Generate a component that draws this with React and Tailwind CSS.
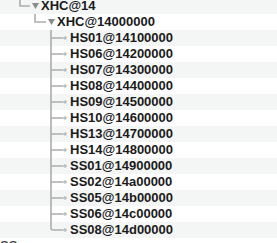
import React from "react"

const children = [
  "HS01@14100000",
  "HS06@14200000",
  "HS07@14300000",
  "HS08@14400000",
  "HS09@14500000",
  "HS10@14600000",
  "HS13@14700000",
  "HS14@14800000",
  "SS01@14900000",
  "SS02@14a00000",
  "SS05@14b00000",
  "SS06@14c00000",
  "SS08@14d00000",
]

const LINE = "#adadad"

function Caret({ x }) {
  return <polygon points={`${x},5 ${x + 7},5 ${x + 3.5},11`} fill="#8a8a8a" />
}

function Row({ index, children }) {
  return (
    <div className={"flex items-center h-4 " + (index % 2 === 0 ? "bg-[#f4f5f5]" : "bg-white")}>
      {children}
    </div>
  )
}

export default function App() {
  return (
    <div className="w-[277px] h-[243px] overflow-hidden bg-white">
      <div className="-mt-0.5 text-[13px] font-bold text-[#1a1a1a] leading-4 [font-family:'Liberation_Sans',Arial,sans-serif]">
        <Row index={0}>
          <svg width="41" height="16" className="shrink-0">
            <path d="M20 0 V8 H30" stroke={LINE} strokeWidth="1.6" fill="none" />
            <Caret x={32} />
          </svg>
          <span>XHC@14</span>
        </Row>
        <Row index={1}>
          <svg width="57" height="16" className="shrink-0">
            <path d="M35 0 V8 H46" stroke={LINE} strokeWidth="1.6" fill="none" />
            <Caret x={48} />
          </svg>
          <span>XHC@14000000</span>
        </Row>
        {children.map((name, i) => {
          const last = i === children.length - 1
          return (
            <Row key={name} index={i + 2}>
              <svg width="70" height="16" className="shrink-0">
                <path
                  d={last ? "M51 0 V6 Q51 8 53 8 H63" : "M51 0 V16 M51 8 H63"}
                  stroke={LINE}
                  strokeWidth="1.6"
                  fill="none"
                />
                <circle cx="65" cy="8" r="1.8" fill="#bdbdbd" />
              </svg>
              <span>{name}</span>
            </Row>
          )
        })}
        <Row index={15}>
          <span className="text-[#444]">SS</span>
        </Row>
      </div>
    </div>
  )
}
